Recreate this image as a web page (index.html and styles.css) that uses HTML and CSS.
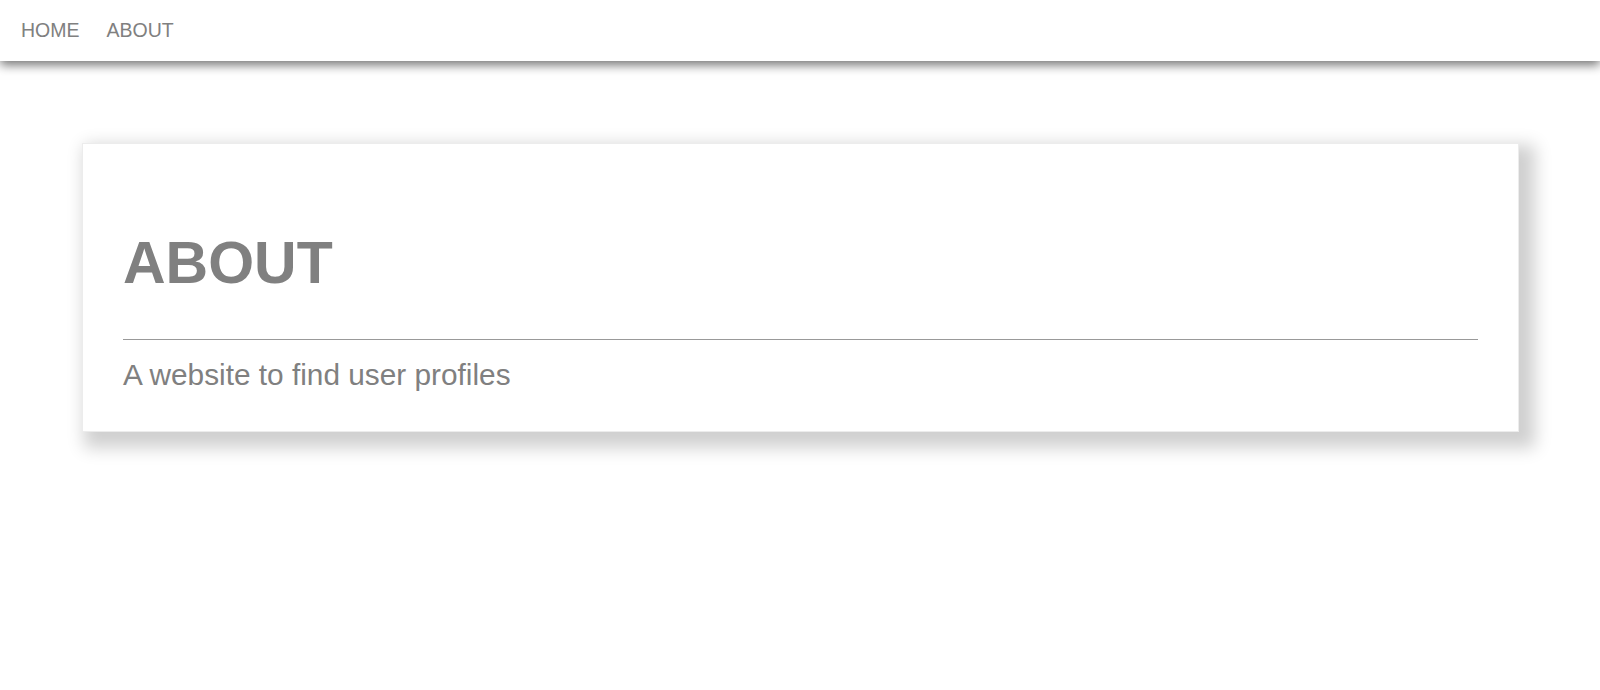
FILE: index.html
```html
<!DOCTYPE html>
<html lang="en">
<head>
<meta charset="utf-8">
<title>About</title>
<link rel="stylesheet" href="styles.css">
</head>
<body>
<nav class="navbar">
  <a class="nav-link" href="#">HOME</a>
  <a class="nav-link" href="#">ABOUT</a>
</nav>
<main class="page">
  <section class="card">
    <h1 class="card-title">ABOUT</h1>
    <hr class="card-rule">
    <p class="card-text">A website to find user profiles</p>
  </section>
</main>
</body>
</html>
```
FILE: styles.css
```css
html, body {
  margin: 0;
  padding: 0;
  background: #ffffff;
  font-family: "Liberation Sans", Arial, Helvetica, sans-serif;
  color: #808080;
}

body {
  min-height: 100vh;
}

.navbar {
  height: 61px;
  display: flex;
  align-items: center;
  gap: 27px;
  padding: 0 0 0 21px;
  background: #ffffff;
  box-shadow: 0 4px 10px rgba(0, 0, 0, 0.55);
  position: relative;
  z-index: 1;
}

.nav-link {
  font-size: 19.5px;
  color: #808080;
  text-decoration: none;
  line-height: 1;
}

.page {
  padding: 82px 81px 120px 82px;
}

.card {
  background: #ffffff;
  border: 1px solid #ececec;
  padding: 40px 40px 40px 40px;
  box-shadow: 9px 9px 16px 7px rgba(0, 0, 0, 0.19);
}

.card-title {
  margin: 45px 0 0 0;
  font-size: 59px;
  line-height: 69px;
  font-weight: bold;
  color: #808080;
}

.card-rule {
  margin: 41px 0 0 0;
  border: 0;
  border-top: 1px solid #999999;
  height: 0;
}

.card-text {
  margin: 18px 0 0 0;
  font-size: 29.8px;
  line-height: 33px;
  color: #808080;
}
```
